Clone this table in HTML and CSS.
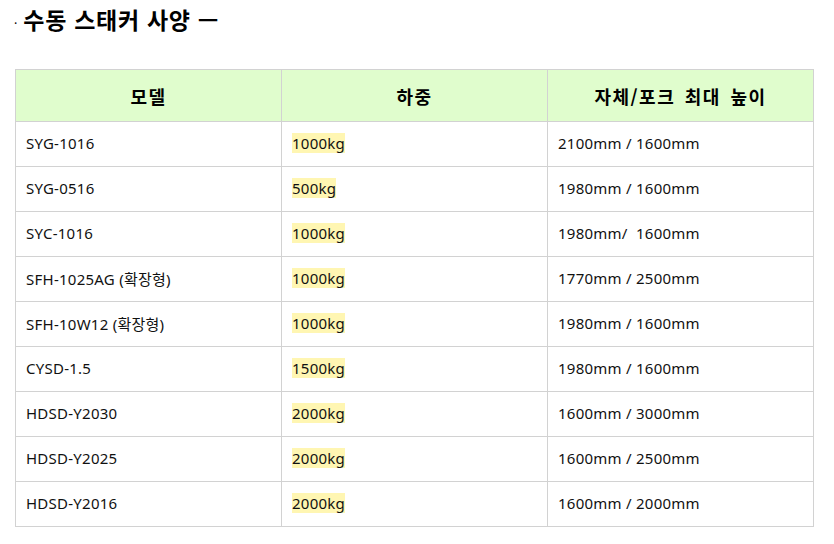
FILE: index.html
```html
<!DOCTYPE html>
<html lang="ko">
<head>
<meta charset="utf-8">
<link rel="stylesheet" href="styles.css">
</head>
<body>
<h2 class="title"><span class="dot">·</span>수동 스태커 사양 —</h2>
<table class="spec">
  <thead>
    <tr><th>모델</th><th>하중</th><th>자체/포크 최대 높이</th></tr>
  </thead>
  <tbody>
    <tr><td>SYG-1016</td><td><span class="hl">1000kg</span></td><td>2100mm / 1600mm</td></tr>
    <tr><td>SYG-0516</td><td><span class="hl">500kg</span></td><td>1980mm / 1600mm</td></tr>
    <tr><td>SYC-1016</td><td><span class="hl">1000kg</span></td><td>1980mm/&nbsp; 1600mm</td></tr>
    <tr><td>SFH-1025AG (확장형)</td><td><span class="hl">1000kg</span></td><td>1770mm / 2500mm</td></tr>
    <tr><td>SFH-10W12 (확장형)</td><td><span class="hl">1000kg</span></td><td>1980mm / 1600mm</td></tr>
    <tr><td>CYSD-1.5</td><td><span class="hl">1500kg</span></td><td>1980mm / 1600mm</td></tr>
    <tr><td>HDSD-Y2030</td><td><span class="hl">2000kg</span></td><td>1600mm / 3000mm</td></tr>
    <tr><td>HDSD-Y2025</td><td><span class="hl">2000kg</span></td><td>1600mm / 2500mm</td></tr>
    <tr><td>HDSD-Y2016</td><td><span class="hl">2000kg</span></td><td>1600mm / 2000mm</td></tr>
  </tbody>
</table>
</body>
</html>
```
FILE: styles.css
```css
html, body {
  margin: 0;
  padding: 0;
  background: #fff;
  color: #111;
  font-family: "Noto Sans", "Noto Sans CJK KR", sans-serif;
}
body {
  padding: 0 15px;
}
.title {
  margin: 0;
  padding-top: 3px;
  height: 66px;
  font-size: 23px;
  font-weight: 700;
  line-height: 32px;
  letter-spacing: 0.7px;
  font-family: "Noto Sans CJK KR", sans-serif;
  color: #000;
}
.dot {
  font-size: 12px;
  font-weight: 400;
  margin-right: 6px;
  margin-left: -1px;
  vertical-align: 1px;
  letter-spacing: 0;
}
.spec {
  width: 799px;
  border-collapse: collapse;
  table-layout: fixed;
}
.spec th, .spec td {
  border: 1px solid #d2d2d2;
  width: 33.33%;
}
.spec th {
  background: #e0fdcd;
  height: 51px;
  font-size: 18px;
  font-weight: 700;
  letter-spacing: 1.5px;
  word-spacing: 3px;
  font-family: "Noto Sans CJK KR", sans-serif;
  text-align: center;
  padding: 0;
  color: #000;
}
.spec td {
  height: 42px;
  font-size: 15px;
  letter-spacing: 0.25px;
  padding: 0 10px 2px;
  color: #111;
}
.hl {
  background: #fff6b2;
}
```
